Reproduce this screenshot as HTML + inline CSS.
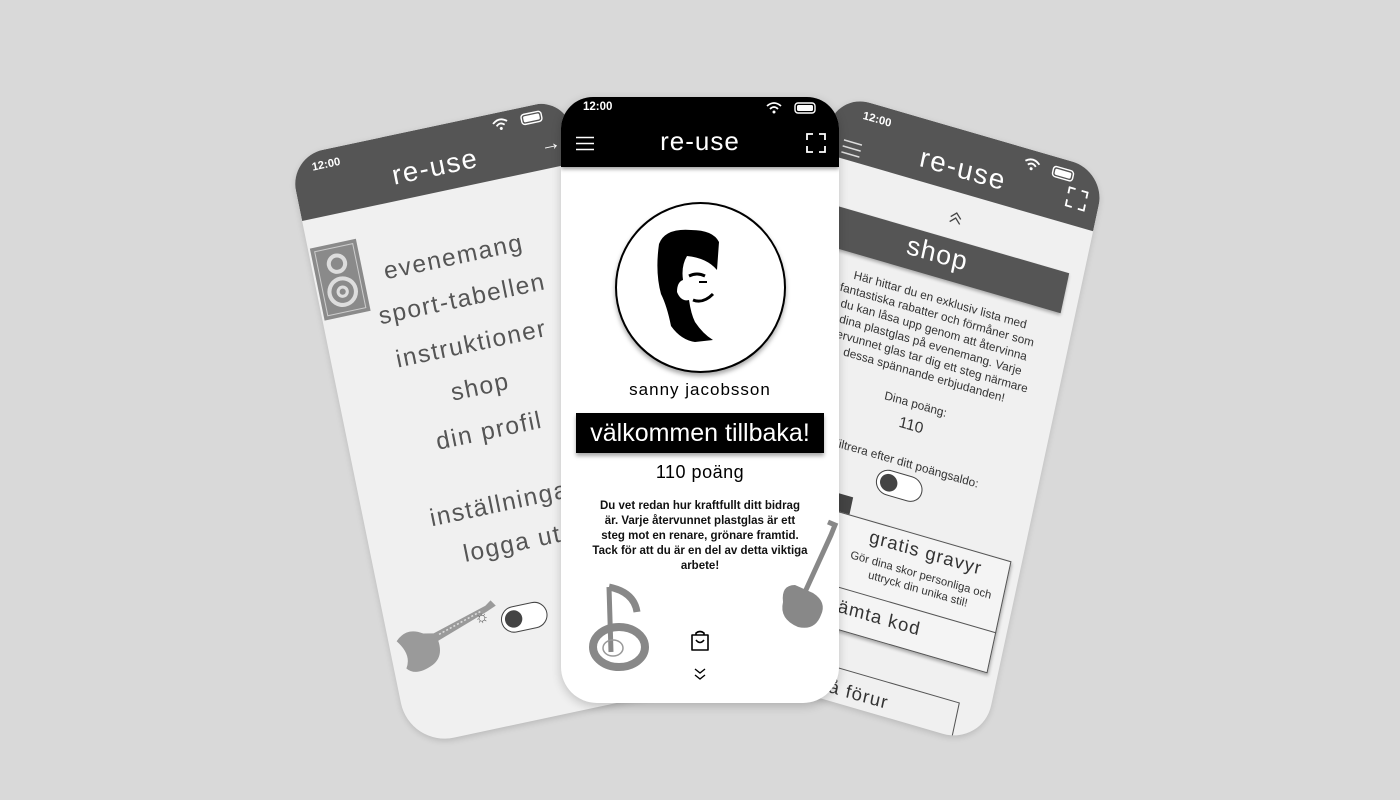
<!DOCTYPE html>
<html><head><meta charset="utf-8"><style>
*{margin:0;padding:0;box-sizing:border-box}
body{width:1400px;height:800px;background:#d9d9d9;position:relative;overflow:hidden;font-family:"Liberation Sans",sans-serif}
.ph{position:absolute;left:0;top:0;transform-origin:0 0;background:#f0f0f0;overflow:hidden;box-shadow:0 2px 6px rgba(0,0,0,.15)}
.ab{position:absolute}
.mi{position:absolute;left:0;width:100%;text-align:center;color:#555;font-size:24px;letter-spacing:1.5px;line-height:28px}
.hd{position:absolute;left:0;top:0;width:100%;background:#555}
.c{text-align:center}
</style></head><body>

<!-- LEFT PHONE -->
<div class="ph" style="width:276px;height:590px;border-radius:34px 30px 30px 44px;transform:matrix(1,-0.213,0.205,1,289,157)">
  <div class="hd" style="height:64px"></div>
  <div class="ab" style="left:20px;top:9px;color:#fff;font-size:11px;font-weight:bold">12:00</div>
  <svg class="ab" style="left:200px;top:4px" width="60" height="16" viewBox="0 0 60 16"><path d="M2 6 Q9 0 16 6 M5 9 Q9 5 13 9" stroke="#fff" stroke-width="1.8" fill="none"/><circle cx="9" cy="12" r="1.5" fill="#fff"/><rect x="30" y="3" width="20" height="10" rx="3" fill="none" stroke="#fff" stroke-width="1.4"/><rect x="32" y="5" width="16" height="6" rx="1.5" fill="#fff"/></svg>
  <div class="ab" style="left:243px;top:30px;color:#fff;font-size:20px">→</div>
  <div class="ab c" style="left:0;top:24px;width:276px;color:#fff;font-size:27px;letter-spacing:1.5px">re-use</div>
  <svg class="ab" style="left:-8px;top:88px" width="60" height="80" viewBox="0 0 60 80"><rect x="10" y="4" width="46" height="72" fill="#8a8a8a"/><rect x="14" y="8" width="38" height="64" fill="none" stroke="#ccc" stroke-width="1"/><circle cx="33" cy="24" r="10" fill="#ddd"/><circle cx="33" cy="24" r="6" fill="#8a8a8a"/><circle cx="33" cy="52" r="15" fill="#ddd"/><circle cx="33" cy="52" r="11" fill="#8a8a8a"/><circle cx="33" cy="52" r="6" fill="#ddd"/><circle cx="33" cy="52" r="3" fill="#8a8a8a"/></svg>
  <div class="mi" style="top:116px">evenemang</div>
  <div class="mi" style="top:158px">sport-tabellen</div>
  <div class="mi" style="top:203px">instruktioner</div>
  <div class="mi" style="top:246px">shop</div>
  <div class="mi" style="top:290px">din profil</div>
  <div class="mi" style="top:362px">inställningar</div>
  <div class="mi" style="top:403px">logga ut</div>
  <svg class="ab" style="left:0px;top:452px" width="120" height="80" viewBox="0 0 120 80"><path d="M8 34 Q20 22 35 32 L45 34 L100 18 L106 14 L110 20 L100 24 L48 42 Q50 58 38 64 Q20 72 12 62 Q20 50 8 34Z" fill="#9a9a9a"/><path d="M50 36 L96 22" stroke="#ddd" stroke-width="1.5" stroke-dasharray="2 2"/></svg>
  <div class="ab" style="left:87px;top:472px;font-size:16px;color:#555">☼</div>
  <div class="ab" style="left:112px;top:476px;width:46px;height:26px;border:1.5px solid #444;border-radius:13px;background:#fff"><div class="ab" style="left:3px;top:3px;width:17px;height:17px;border-radius:50%;background:#444"></div></div>
</div>

<!-- RIGHT PHONE -->
<div class="ph" style="width:270px;height:574px;border-radius:34px 34px 40px 30px;transform:matrix(1,0.29,-0.215,1,836,93)">
  <div class="hd" style="height:60px"></div>
  <div class="ab" style="left:30px;top:8px;color:#fff;font-size:11px;font-weight:bold">12:00</div>
  <svg class="ab" style="left:190px;top:6px" width="60" height="16" viewBox="0 0 60 16"><path d="M2 6 Q9 0 16 6 M5 9 Q9 5 13 9" stroke="#fff" stroke-width="1.8" fill="none"/><circle cx="9" cy="12" r="1.5" fill="#fff"/><rect x="30" y="3" width="20" height="10" rx="3" fill="none" stroke="#fff" stroke-width="1.4"/><rect x="32" y="5" width="16" height="6" rx="1.5" fill="#fff"/></svg>
  <svg class="ab" style="left:16px;top:40px" width="20" height="16"><path d="M1 2H19M1 8H19M1 14H19" stroke="#ddd" stroke-width="1.5"/></svg>
  <div class="ab c" style="left:0;top:22px;width:270px;color:#fff;font-size:27px;letter-spacing:1.5px">re-use</div>
  <svg class="ab" style="left:238px;top:24px" width="20" height="20"><path d="M1 7V1H7M13 1H19V7M19 13V19H13M7 19H1V13" stroke="#fff" stroke-width="1.8" fill="none"/></svg>
  <svg class="ab" style="left:131px;top:78px" width="14" height="14"><path d="M2 7L7 2L12 7M2 12L7 7L12 12" stroke="#444" stroke-width="1.3" fill="none"/></svg>
  <div class="ab" style="left:0;top:106px;width:256px;height:40px;background:#555;box-shadow:0 2px 3px rgba(0,0,0,.3)"></div>
  <div class="ab c" style="left:0;top:108px;width:256px;color:#fff;font-size:26px;letter-spacing:1px">shop</div>
  <div class="ab c" style="left:0;top:160px;width:280px;color:#333;font-size:11.5px;line-height:15px">Här hittar du en exklusiv lista med<br>fantastiska rabatter och förmåner som<br>du kan låsa upp genom att återvinna<br>dina plastglas på evenemang. Varje<br>återvunnet glas tar dig ett steg närmare<br>dessa spännande erbjudanden!</div>
  <div class="ab c" style="left:0;top:266px;width:276px;color:#333;font-size:11.5px">Dina poäng:</div>
  <div class="ab c" style="left:0;top:284px;width:276px;color:#333;font-size:15px">110</div>
  <div class="ab c" style="left:0;top:324px;width:280px;color:#333;font-size:11.5px">Filtrera efter ditt poängsaldo:</div>
  <div class="ab" style="left:116px;top:340px;width:46px;height:25px;border:1.5px solid #444;border-radius:13px;background:#fff"><div class="ab" style="left:3px;top:3px;width:17px;height:17px;border-radius:50%;background:#444"></div></div>
  <div class="ab" style="left:40px;top:376px;width:58px;height:22px;background:#444"></div>
  <div class="ab" style="left:20px;top:393px;width:240px;height:112px;border:1px solid #555;background:#f4f4f4;box-shadow:1px 2px 3px rgba(0,0,0,.3)"></div>
  <div class="ab" style="left:20px;top:464px;width:240px;height:1px;background:#555"></div>
  <div class="ab c" style="left:95px;top:398px;width:165px;color:#333;font-size:18px;letter-spacing:1px">gratis gravyr</div>
  <div class="ab c" style="left:95px;top:424px;width:165px;color:#333;font-size:11px;line-height:14px">Gör dina skor personliga och<br>uttryck din unika stil!</div>
  <div class="ab" style="left:95px;top:472px;color:#333;font-size:18px;letter-spacing:1px">hämta kod</div>
  <div class="ab" style="left:40px;top:540px;width:200px;height:60px;border:1px solid #555"></div>
  <div class="ab c" style="left:40px;top:550px;width:200px;color:#333;font-size:18px;letter-spacing:1px">få förur</div>
</div>

<!-- CENTER PHONE -->
<div class="ab" style="left:561px;top:97px;width:278px;height:606px;background:#fff;border-radius:32px 32px 36px 36px;overflow:hidden;box-shadow:0 3px 10px rgba(0,0,0,.2)">
  <div class="ab" style="left:0;top:0;width:278px;height:70px;background:#000;box-shadow:0 2px 4px rgba(0,0,0,.4)"></div>
  <div class="ab" style="left:22px;top:4px;color:#fff;font-size:11.5px;font-weight:bold">12:00</div>
  <svg class="ab" style="left:204px;top:3px" width="60" height="16" viewBox="0 0 60 16"><path d="M2 6 Q9 0 16 6 M5 9 Q9 5 13 9" stroke="#fff" stroke-width="1.8" fill="none"/><circle cx="9" cy="12" r="1.5" fill="#fff"/><rect x="30" y="3" width="20" height="10" rx="3" fill="none" stroke="#fff" stroke-width="1.4"/><rect x="32" y="5" width="16" height="6" rx="1.5" fill="#fff"/></svg>
  <svg class="ab" style="left:14px;top:39px" width="20" height="16"><path d="M1 1.5H19M1 7.5H19M1 13.5H19" stroke="#fff" stroke-width="1.6"/></svg>
  <div class="ab c" style="left:0;top:29px;width:278px;color:#fff;font-size:26px;letter-spacing:1px">re-use</div>
  <svg class="ab" style="left:245px;top:36px" width="20" height="20"><path d="M1 7V1H7M13 1H19V7M19 13V19H13M7 19H1V13" stroke="#fff" stroke-width="1.8" fill="none"/></svg>
  <div class="ab" style="left:54px;top:105px;width:171px;height:171px;border:2px solid #000;border-radius:50%;box-shadow:0 3px 5px rgba(0,0,0,.35);background:#fff"></div>
  <svg class="ab" style="left:90px;top:125px" width="100" height="130" viewBox="0 0 100 130"><path d="M8 22 Q14 6 40 8 Q62 8 68 20 L66 48 Q56 36 36 34 Q30 44 32 58 Q26 60 26 70 Q30 80 38 78 Q40 92 44 100 Q52 112 62 118 L44 120 Q30 118 20 104 Q16 84 10 72 Q4 50 8 22Z" fill="#000"/><path d="M38 54 Q46 50 54 54 M42 78 Q52 82 62 72" stroke="#000" stroke-width="3" fill="none"/><path d="M48 60 L56 60" stroke="#000" stroke-width="2"/></svg>
  <div class="ab c" style="left:0;top:283px;width:278px;font-size:17px;letter-spacing:1px;color:#000">sanny jacobsson</div>
  <div class="ab c" style="left:15px;top:316px;width:248px;height:40px;background:#000;color:#fff;font-size:25px;line-height:40px;box-shadow:0 3px 4px rgba(0,0,0,.35)">välkommen tillbaka!</div>
  <div class="ab c" style="left:0;top:365px;width:278px;font-size:18px;letter-spacing:.5px;color:#000">110 poäng</div>
  <div class="ab c" style="left:0;top:402px;width:278px;font-size:11.5px;font-weight:bold;line-height:15px;color:#111">Du vet redan hur kraftfullt ditt bidrag<br>är. Varje återvunnet plastglas är ett<br>steg mot en renare, grönare framtid.<br>Tack för att du är en del av detta viktiga<br>arbete!</div>
  <svg class="ab" style="left:28px;top:485px" width="65" height="90" viewBox="0 0 65 90"><path d="M20 5 L22 70" stroke="#888" stroke-width="5"/><path d="M20 5 Q45 10 48 30" stroke="#888" stroke-width="7" fill="none"/><ellipse cx="30" cy="65" rx="26" ry="20" fill="none" stroke="#888" stroke-width="8"/><ellipse cx="24" cy="66" rx="10" ry="8" fill="none" stroke="#999" stroke-width="1.5"/></svg>
  <svg class="ab" style="left:212px;top:420px" width="66" height="115" viewBox="0 0 66 115"><path d="M55 5 L62 8 L58 18 L32 75" stroke="#888" stroke-width="5" fill="none"/><path d="M22 68 Q8 68 10 85 Q6 102 25 110 Q42 114 48 98 Q54 85 40 76 Z" fill="#888"/></svg>
  <svg class="ab" style="left:129px;top:533px" width="20" height="22"><path d="M2 5H18V20H2Z M6 5V3Q10 0 14 3V5 M6 10Q10 15 14 10" stroke="#000" stroke-width="1.6" fill="none" stroke-linejoin="round"/></svg>
  <svg class="ab" style="left:133px;top:570px" width="12" height="14"><path d="M1 2L6 6L11 2M1 8L6 12L11 8" stroke="#000" stroke-width="1.4" fill="none"/></svg>
</div>
</body></html>
